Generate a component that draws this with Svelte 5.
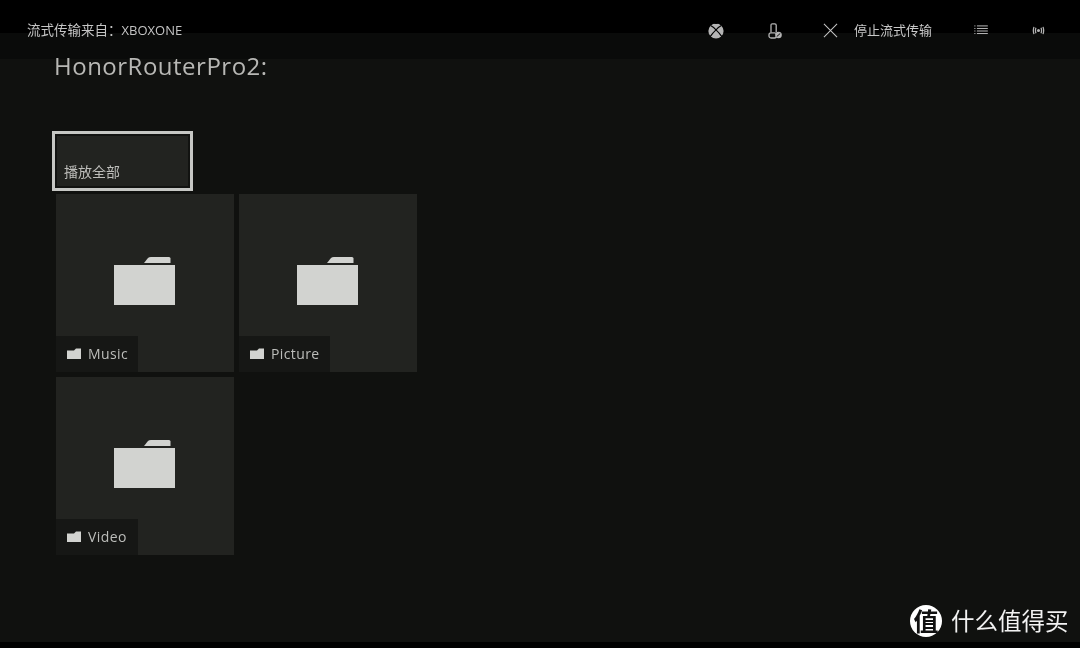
<script>
  const folders = ['Music', 'Picture', 'Video'];
</script>

<div class="screen">
  <header class="topbar">
    <div class="source">流式传输来自：<span class="device">XBOXONE</span></div>
    <div class="actions">
      <svg class="ico-xbox" viewBox="0 0 16 16">
        <circle cx="8" cy="8" r="7.6" fill="#b4b4b4" />
        <path d="M2.600 2.600 Q6 4.400 8 6.800 Q10 4.400 13.400 2.600 M8 6.800 Q11.500 10 13.800 13.600 M8 6.800 Q4.500 10 2.200 13.600" stroke="#000" stroke-width="1.100" fill="none" />
        <path d="M5.500 0 Q8 1.800 10.500 0 Z" fill="#000" />
      </svg>
      <svg class="ico-remote" viewBox="0 0 14 16">
        <path d="M3 9.500 V2.200 Q3 0.800 4.400 0.800 H6.800 Q8.200 0.800 8.200 2.200 V9" fill="none" stroke="#b4b4b4" stroke-width="1.300" />
        <rect x="1" y="9.800" width="7.500" height="5.200" rx="2" fill="none" stroke="#b4b4b4" stroke-width="1.300" />
        <circle cx="10.500" cy="12" r="3.300" fill="#b4b4b4" />
        <path d="M8.800 13.500 L12.200 10.500" stroke="#000" stroke-width="0.900" />
      </svg>
      <svg class="ico-close" viewBox="0 0 16 16">
        <path d="M1 1 L15 15 M15 1 L1 15" stroke="#c4c4c4" stroke-width="1.100" fill="none" />
      </svg>
      <span class="stop">停止流式传输</span>
      <svg class="ico-list" viewBox="0 0 15 11">
        <path d="M3 1 H15 M3 3.800 H15 M3 6.600 H15 M3 9.400 H15" stroke="#b8b8b8" stroke-width="1.100" />
        <path d="M0 1 H1.500 M0 3.800 H1.500 M0 6.600 H1.500 M0 9.400 H1.500" stroke="#999" stroke-width="1.100" />
      </svg>
      <svg class="ico-cast" viewBox="0 0 14 10">
        <circle cx="7" cy="5" r="1.700" fill="#b4b4b4" />
        <path d="M4.200 2 Q3 5 4.200 8 M9.800 2 Q11 5 9.800 8 M2 1 Q0.500 5 2 9 M12 1 Q13.500 5 12 9" stroke="#b4b4b4" stroke-width="1.400" fill="none" />
      </svg>
    </div>
  </header>

  <main class="content">
    <h1>HonorRouterPro2:</h1>
    <button class="play-all">播放全部</button>
    <div class="grid">
      {#each folders as name}
        <div class="tile">
          <svg class="folder-big" viewBox="0 0 61 48">
            <path d="M30 6 L34 1 Q35 0 37 0 H55 Q56.500 0 56.500 1.500 V6 Z" fill="#d2d3d0" />
            <rect x="0" y="8" width="61" height="40" fill="#d2d3d0" />
          </svg>
          <div class="label">
            <svg class="folder-small" viewBox="0 0 14 11">
              <path d="M0 2.500 H7 L9 0.500 H14 V11 H0 Z" fill="#d2d3d0" />
            </svg>
            <span>{name}</span>
          </div>
        </div>
      {/each}
    </div>
  </main>

  <div class="bottom-strip"></div>

  <div class="watermark">
    <span class="badge">值</span>
    <span class="brand">什么值得买</span>
  </div>
</div>

<style>
  :global(body) {
    margin: 0;
    background: #000;
  }

  .screen {
    position: relative;
    width: 1080px;
    height: 648px;
    overflow: hidden;
    display: flex;
    flex-direction: column;
    background: #10110f;
    font-family: "Open Sans", "Noto Sans CJK SC", sans-serif;
  }

  /* the bar sits over the page, the title runs a little under it */
  .topbar {
    position: absolute;
    top: 0;
    left: 0;
    right: 0;
    height: 59px;
    background: linear-gradient(#000 0, #000 33px, #0a0b0a 33px);
    color: #c8c8c8;
    font-size: 13px;
  }

  .source {
    position: absolute;
    left: 27px;
    top: 21px;
    line-height: 18px;
    white-space: nowrap;
    color: #c4c4c4;
    font-size: 13.500px;
    will-change: opacity;
  }

  .device {
    font-size: 13px;
  }

  .actions {
    position: absolute;
    top: 0;
    left: 0;
    right: 0;
    height: 60px;
  }

  .actions svg, .stop {
    position: absolute;
  }

  .ico-xbox { left: 708px; top: 23px; width: 16px; height: 16px; }
  .ico-remote { left: 768px; top: 23px; width: 14px; height: 16px; }
  .ico-close { left: 823px; top: 23px; width: 15px; height: 15px; }
  .stop { left: 854px; top: 21px; line-height: 18px; white-space: nowrap; color: #c8c8c8; will-change: opacity; }
  .ico-list { left: 974px; top: 25px; width: 14px; height: 10px; }
  .ico-cast { left: 1032px; top: 26px; width: 13px; height: 9px; }

  .content {
    flex: 1;
    padding: 50px 0 0 52px;
    will-change: opacity;
  }

  h1 {
    margin: 0 0 0 2px;
    font-size: 24px;
    line-height: 32px;
    font-weight: 400;
    color: #b8b8b5;
    letter-spacing: 0.5px;
  }

  .play-all {
    display: flex;
    align-items: flex-end;
    box-sizing: border-box;
    width: 141px;
    height: 60px;
    margin: 49px 0 3px;
    padding: 0 0 4px 9px;
    background: #222320;
    border: 3px solid #c6c7c4;
    outline: 2px solid #121311;
    outline-offset: -5px;
    color: #bdbdba;
    font-family: inherit;
    font-size: 14px;
    line-height: 24px;
  }

  .grid {
    display: grid;
    grid-template-columns: 178px 178px;
    grid-auto-rows: 178px;
    gap: 5px;
    margin-left: 4px;
  }

  .tile {
    position: relative;
    display: flex;
    align-items: flex-start;
    justify-content: center;
    background: #222320;
  }

  .folder-big {
    width: 61px;
    height: 48px;
    margin-top: 63px;
    margin-right: 1px;
  }

  .label {
    position: absolute;
    left: 0;
    bottom: 0;
    box-sizing: border-box;
    height: 36px;
    min-width: 82px;
    display: flex;
    align-items: center;
    gap: 7px;
    padding: 0 10px 2px 11px;
    background: #161715;
    color: #bcbdba;
    font-size: 14px;
    letter-spacing: 0.4px;
  }

  .folder-small {
    width: 14px;
    height: 11px;
  }

  .bottom-strip {
    height: 6px;
    background: #000;
  }

  .watermark {
    position: absolute;
    left: 910px;
    top: 605px;
    display: flex;
    align-items: center;
    gap: 9px;
    will-change: opacity;
  }

  .badge {
    width: 32px;
    height: 32px;
    border-radius: 50%;
    background: #fff;
    color: #111;
    font-size: 25px;
    line-height: 32px;
    text-align: center;
    font-weight: 700;
  }

  .brand {
    color: #f2f2f2;
    font-size: 23.500px;
    line-height: 32px;
    white-space: nowrap;
  }
</style>
